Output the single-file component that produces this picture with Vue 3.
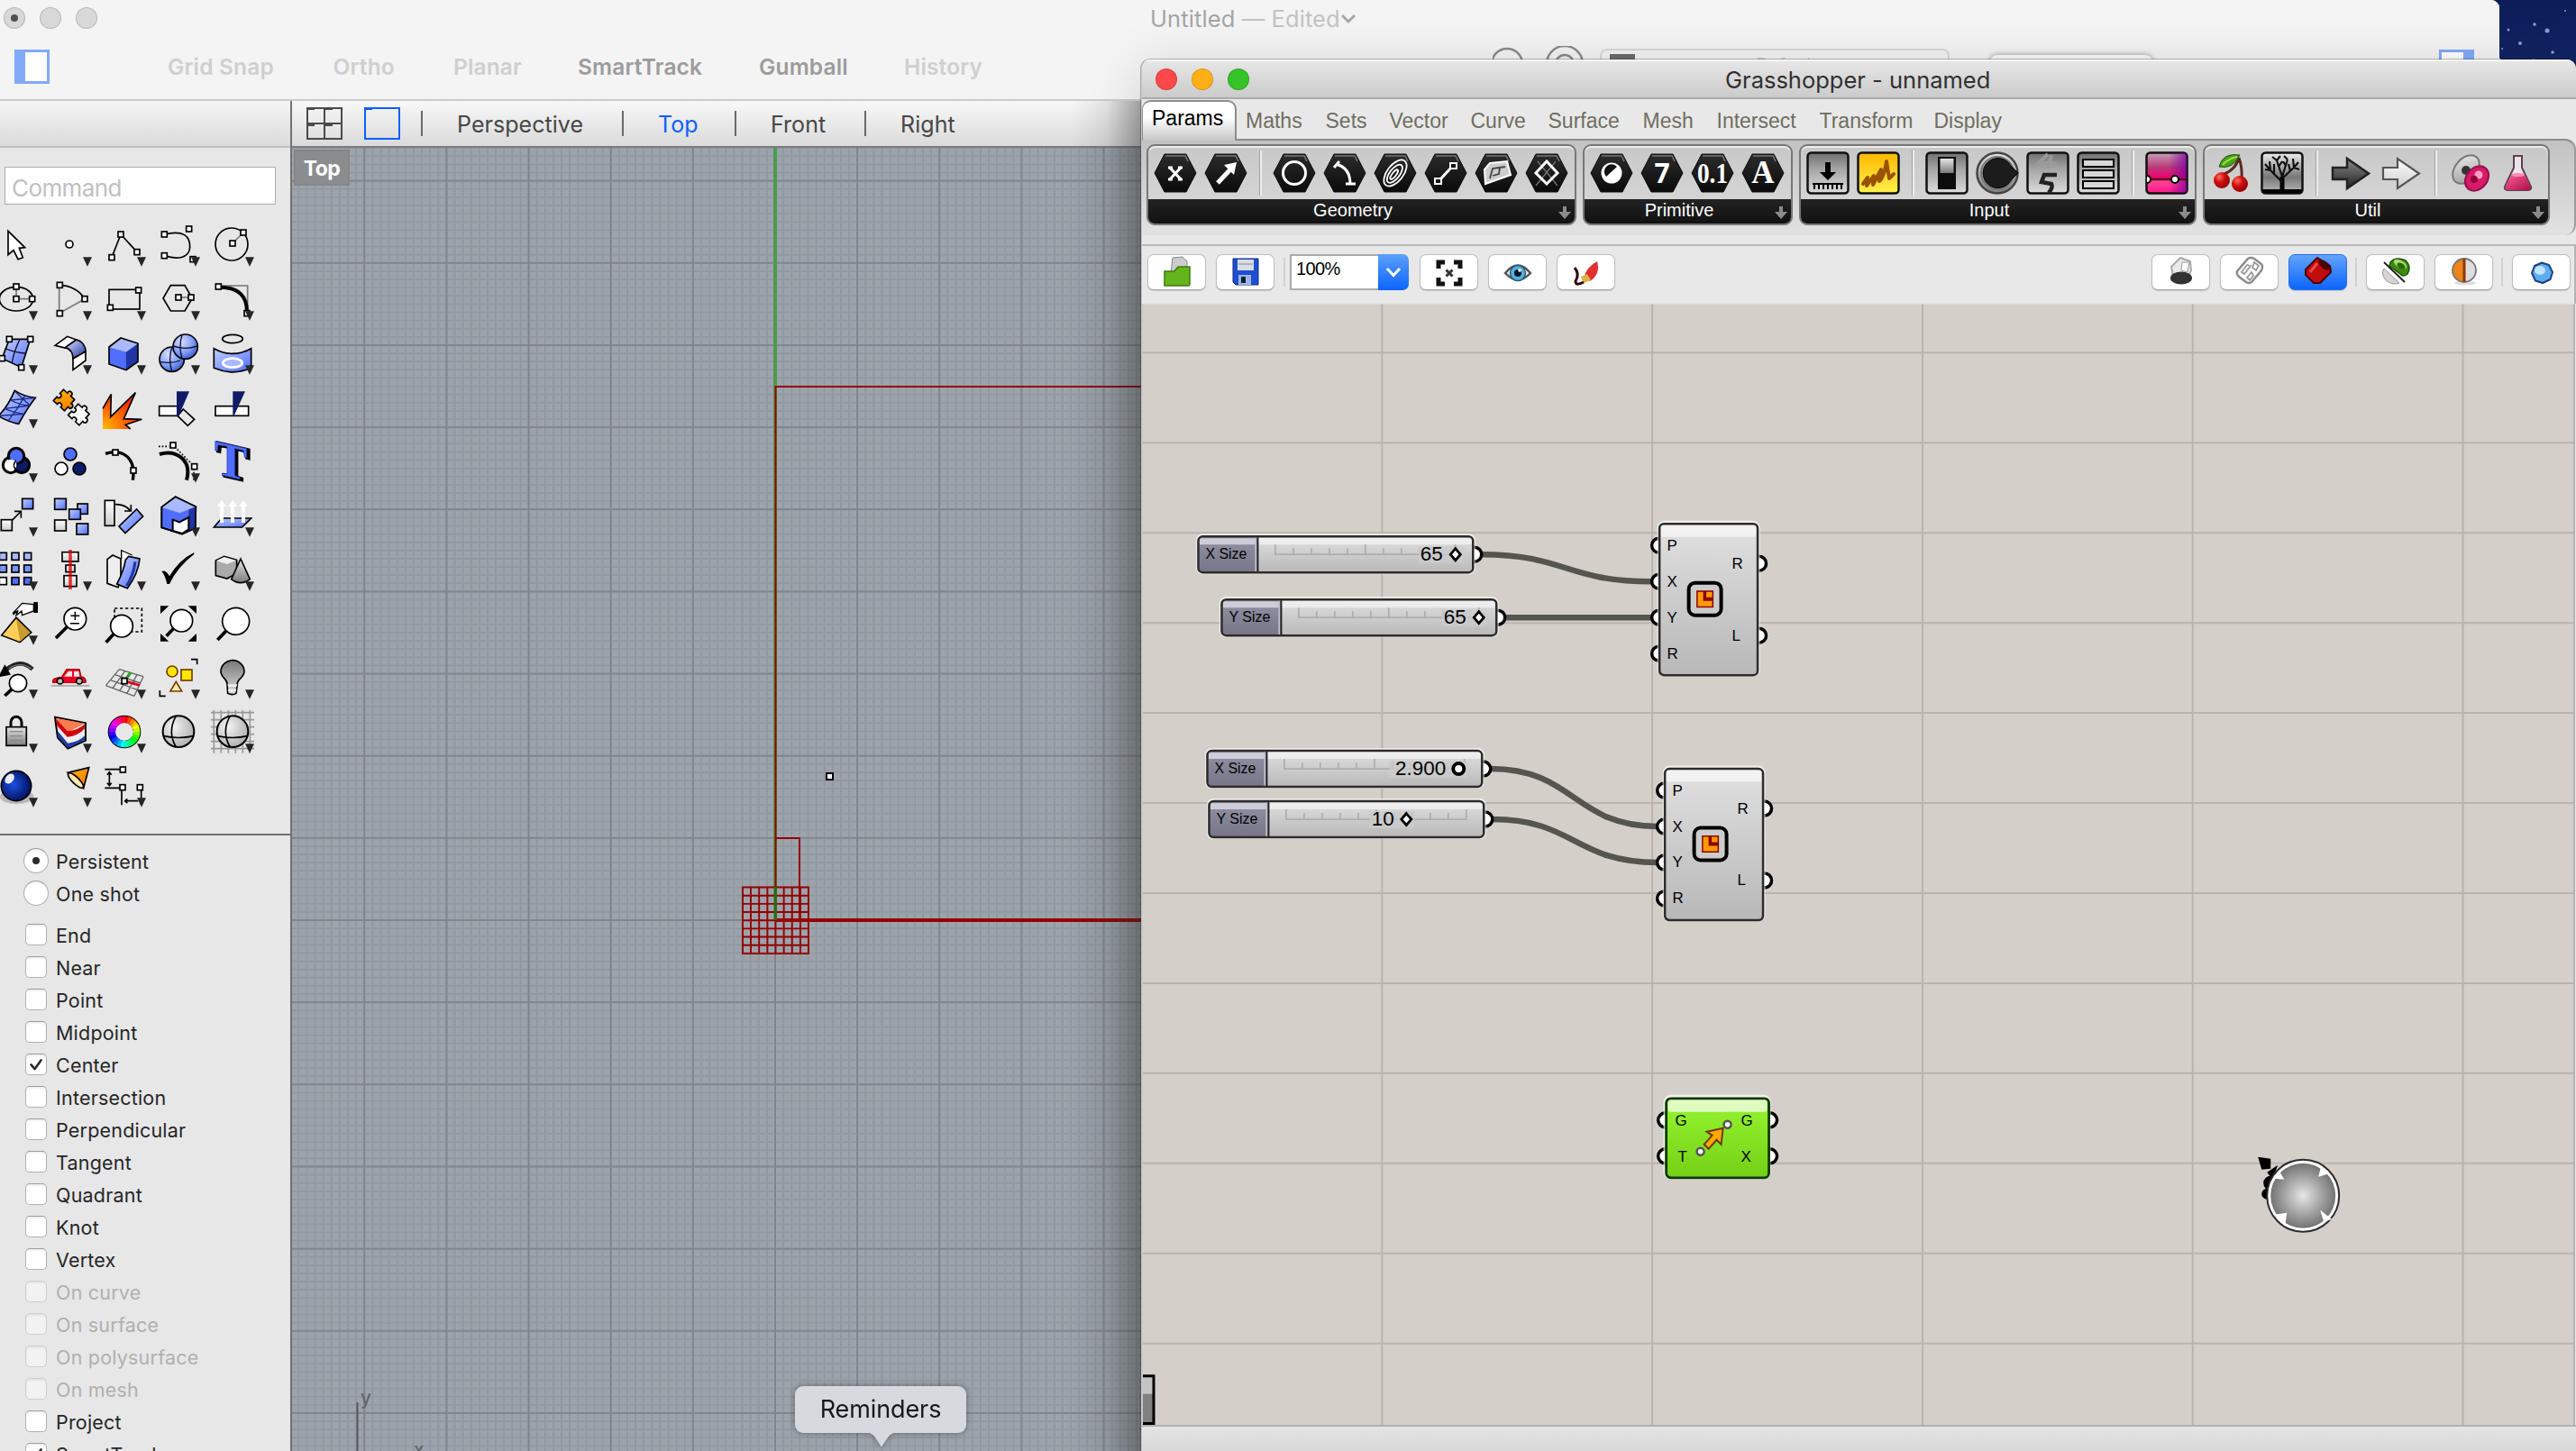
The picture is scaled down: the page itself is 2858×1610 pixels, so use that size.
<script setup>
const snaps = [
  { t: 'Grid Snap', w: 183.5 },
  { t: 'Ortho', w: 133.5 },
  { t: 'Planar', w: 138 },
  { t: 'SmartTrack', w: 201 },
  { t: 'Gumball', w: 161 },
  { t: 'History', w: 100 },
].map((s) => ({ ...s, on: s.t === 'SmartTrack' || s.t === 'Gumball' }))
const views = [
  { t: 'Perspective', w: 141 },
  { t: 'Top', w: 43, on: true },
  { t: 'Front', w: 62 },
  { t: 'Right', w: 64 },
]
const osnaps = [
  { t: 'End' }, { t: 'Near' }, { t: 'Point' }, { t: 'Midpoint' }, { t: 'Center', on: true },
  { t: 'Intersection' }, { t: 'Perpendicular' }, { t: 'Tangent' }, { t: 'Quadrant' }, { t: 'Knot' },
  { t: 'Vertex' }, { t: 'On curve', off: true }, { t: 'On surface', off: true },
  { t: 'On polysurface', off: true }, { t: 'On mesh', off: true }, { t: 'Project' }, { t: 'SmartTrack', on: true },
]

/* Tool palette: every glyph is drawn in 180-unit cells of one shared sheet */
const q = (x, y, s = 18) => `<rect x="${x - s / 2}" y="${y - s / 2}" width="${s}" height="${s}" fill="#fff" stroke="#000" stroke-width="5"/>`
const ln = (d, c = '#000', w = 5, f = 'none', x = '') => `<path d="${d}" fill="${f}" stroke="${c}" stroke-width="${w}" ${x}/>`
const ci = (x, y, r, f = '#fff', w = 5) => `<circle cx="${x}" cy="${y}" r="${r}" fill="${f}" stroke="#000" stroke-width="${w}"/>`
const bx = (x, y, w, h, f = 'url(#blueG)') => `<rect x="${x}" y="${y}" width="${w}" height="${h}" fill="${f}" stroke="#000" stroke-width="5"/>`
const lens = (x, y, r, hx, hy) => ln(`M${x - r * 0.72} ${y + r * 0.72}L${hx} ${hy}`, '#000', 11) + ci(x, y, r)
const wheel = Array.from({ length: 24 }, (_, i) => {
  const a = (i * 15 * Math.PI) / 180, b = ((i + 1.1) * 15 * Math.PI) / 180
  return `<path d="M${414 + 41 * Math.sin(a)} ${756 - 41 * Math.cos(a)}A41 41 0 0 1 ${414 + 41 * Math.sin(b)} ${756 - 41 * Math.cos(b)}" fill="none" stroke="hsl(${i * 15},100%,50%)" stroke-width="22"/>`
}).join('')
/* one jigsaw piece: knobs on two sides, sockets on the other two */
const piece = (x, y, f) => `<path transform="translate(${x} ${y}) rotate(42)" d="M-25 -25H-7C-14 -40 14 -40 7 -25H25V-7C40 -14 40 14 25 7V25H7C13 12 -13 12 -7 25H-25V7C-12 13 -12 -13 -25 -7Z" fill="${f}" stroke="#000" stroke-width="5" stroke-linejoin="round"/>`
const ball = (x, y, r, f = 'url(#greyBall)') => ci(x, y, r, f, 6) + ln(`M${x - r} ${y + 14}Q${x} ${y + 27} ${x + r} ${y + 14}M${x - 8} ${y - r}Q${x - 38} ${y} ${x - 8} ${y + r}`)
const glyphs = [
  ln('M27 49V128L45 113L60 143L76 137L64 106L83 104Z', '#000', 5, '#fff'),
  ci(231, 93, 12),
  ln('M372 137L402 60L456 119') + q(372, 137) + q(402, 60) + q(456, 119),
  ln('M547 60C610 45 634 65 632 105C628 140 590 145 547 131') + q(547, 60) + q(547, 131) + q(629, 42) + q(642, 143),
  ci(771, 93, 54, 'none') + ln('M774 90L810 54', '#777') + q(774, 90) + q(810, 54),
  `<ellipse cx="54" cy="275" rx="56" ry="40" fill="none" stroke="#000" stroke-width="5"/>` + ln('M54 234V275H107', '#777') + q(54, 234) + q(54, 275) + q(107, 275),
  ln('M197 229V323L282 275', '#777') + ln('M199 229Q255 232 282 275') + q(199, 229) + q(199, 323) + q(282, 275),
  bx(363, 244, 102, 65, 'none') + q(461, 246) + q(367, 304),
  ln('M543 273L568 230H615L640 273L615 315H568Z') + ln('M594 270H636', '#777') + q(594, 270) + q(636, 270),
  ln('M726 231H824V323', '#777') + ln('M735 236Q824 238 822 322', '#000', 12) + q(727, 234) + q(822, 323),
  ln('M31 409H101L71 503L7 473Z', '#000', 5, 'url(#blueG)') + ln('M66 409Q46 450 40 488M16 440Q52 455 86 456', '#113', 4) + q(31, 409) + q(101, 409) + q(71, 503) + q(7, 473),
  ln('M183 430L224 400L254 411L217 438Z', '#000', 5, '#fff') + ln('M254 411C275 415 286 435 285 450L243 474C243 455 235 442 217 437Z', '#000', 5, 'url(#blueD)') + ln('M285 450V480L243 511V474Z', '#000', 5, '#fff'),
  ln('M363 435L420 451V512L363 492Z', '#4f6dff', 1, '#4f6dff') + ln('M420 451L459 423V484L420 512Z', '#2034a4', 1, '#2034a4') + ln('M363 435L402 405L459 423L420 451Z', '#a9b9ff', 1, '#a9b9ff') + ln('M363 435L402 405L459 423V484L420 512L363 492Z'),
  ci(572, 476, 41, 'url(#blueBall)') + ln('M531 484Q572 492 600 480M572 436Q560 476 572 516', '#113', 4) + ci(617, 434, 41, 'url(#blueBall)') + ln('M577 432Q617 446 657 432M606 394Q594 434 606 474', '#113', 4),
  `<ellipse cx="774" cy="408" rx="34" ry="14" fill="none" stroke="#000" stroke-width="5"/>` + ln('M712 440Q774 474 836 440V505Q774 532 712 505Z', '#000', 5, 'url(#blueG)') + `<ellipse cx="774" cy="488" rx="32" ry="15" fill="#a9b9ff" stroke="#fff" stroke-width="8"/>`,
  ln('M49 580Q80 600 118 604Q90 640 62 691Q30 685 -5 665Q28 630 49 580Z', '#000', 5, 'url(#blueG)') + ln('M84 596Q60 640 28 680M35 612Q70 630 100 630M15 640Q50 655 82 658M49 582L100 630M118 604L35 612M100 630L15 640M82 658L-3 664', '#1c2c80', 4),
  piece(262, 660, '#fff') + piece(213, 612, 'url(#orangeG)'),
  `<path d="M342 640L370 592L368 668L451 587L412 674L472 676L418 692L434 708H342Z" fill="url(#fire)"/>` + ln('M342 640L370 592L368 668L451 587L412 674L472 676L418 694L434 708'),
  bx(530, 632, 62, 32, '#fff') + ln('M610 642L647 676L625 697L591 664Z', '#000', 5, '#e7e7e7') + `<path d="M588 583H630L594 667H588Z" fill="#101a66"/>`,
  bx(717, 632, 110, 32, '#fff') + `<path d="M775 583H816L779 664H775Z" fill="#101a66"/>`,
  ci(36, 828, 26, '#fff', 9) + ci(72, 828, 26, '#0d1a66', 9) + ci(54, 798, 26, '#4f6dff', 9) + `<circle cx="36" cy="828" r="19" fill="#fff"/><path d="M54 812Q40 825 52 845" stroke="#000" stroke-width="4" fill="none"/>`,
  ci(234, 792, 21, '#4f6dff') + ci(204, 840, 21) + ci(264, 840, 21, '#0d1a66'),
  ln('M351 790C400 775 455 795 442 878', '#000', 10) + q(384, 786) + q(444, 846),
  ln('M531 792C585 775 640 810 621 878', '#000', 12) + ln('M528 766H562M590 776L640 826M645 840V880', '#000', 5, 'none', 'stroke-dasharray="5 6"') + q(576, 762) + q(647, 833),
  `<g transform="translate(771 816) skewY(13)" font-family="Liberation Serif, serif" font-weight="bold" font-size="164" text-anchor="middle"><text x="5" y="55" fill="#101a66" stroke="#000" stroke-width="9">T</text><text x="-2" y="53" fill="#4f6dff" stroke="#2438a8" stroke-width="2">T</text></g>`,
  bx(74, -20, 36, 34) + bx(4, 50, 36, 36, 'url(#whiteG)') + ln('M40 52L68 24M48 22H70V44'),
  bx(182, -20, 38, 36) + bx(258, -3, 34, 34) + bx(230, 15, 38, 34) + bx(182, 51, 38, 36, 'url(#whiteG)') + bx(255, 63, 38, 36),
  bx(349, -14, 32, 84, 'url(#whiteG)') + ln('M455 15L476 39L417 95L396 72Z', '#000', 5, 'url(#blueG)') + ln('M384 -1Q416 -2 434 20M414 21H436V0'),
  ln('M538 8L584 -26L652 7L650 78L606 98L538 76Z', '#000', 5, '#4f6dff') + ln('M538 8L584 -26L652 7L598 27Z', '#a9b9ff', 1, '#a9b9ff') + `<path d="M628 16L652 7L650 78L628 87Z" fill="#2034a4"/>` + ln('M575 50L597 58L628 42V82L606 96L575 87Z', '#000', 6, '#fff') + ln('M538 8L584 -26L652 7L650 78L606 98L538 76Z'),
  ln('M712 75L738 45H836L806 75Z', '#000', 5, 'url(#blueG)') + [738, 774, 810].map((x) => `<path d="M${x - 6} 60V6H${x - 15}L${x} -16L${x + 15} 6H${x + 6}V60Z" fill="#fff"/>`).join(''),
  [172, 213, 254].map((y, j) => [10, 51, 92].map((x, i) => bx(x - 12, y - 12, 24, 24, j === 2 ? (i ? '#4f6dff' : '#fff') : j ? '#7b93ff' : '#a9b9ff')).join('')).join(''),
  bx(207, 158, 54, 31, 'url(#whiteG)') + bx(219, 201, 30, 23, 'url(#whiteG)') + bx(213, 236, 42, 36, 'url(#whiteG)') + ln('M234 150V282', '#d00000', 11, 'none', 'opacity=".75"'),
  ln('M404 180V152L440 168', '#000', 4, '#fff') + ln('M357 182L375 168L402 180V250L393 275L357 262Z', '#000', 5, '#eee') + ln('M428 172L465 180Q460 230 424 278L389 264Q412 220 418 184Z', '#000', 5, 'url(#blueG)') + ln('M450 190Q444 236 421 270', '#2034a4', 9),
  `<path d="M538 222Q552 216 564 238Q596 184 645 160Q648 162 645 166Q592 206 564 264L556 264Q550 236 538 222Z" fill="#000"/>`,
  ln('M718 186L746 172L788 184V228L756 246L718 236Z', '#000', 5, '#aaa') + `<path d="M720 187L746 174L786 185L756 198Z" fill="#eee"/>` + ln('M801 180L832 248Q800 272 770 248Z', '#000', 5, 'url(#greyG)'),
  ln('M5 435L54 376L104 425L66 458Z', '#000', 5, '#ffcf5a') + `<path d="M54 380L101 425L67 455Z" fill="#c99a2c"/>` + ln('M112 332L74 328L42 362L52 354L44 366L60 352L54 368L72 354L74 368L90 362L112 354Z', '#000', 4, '#fff') + `<rect x="112" y="324" width="14" height="36"/>`,
  lens(250, 380, 37, 186, 444) + ln('M250 356V384M235 370H265M234 395H264', '#000', 4.5),
  `<rect x="381" y="345" width="91" height="78" fill="none" stroke="#000" stroke-width="5" stroke-dasharray="10 8"/>` + lens(405, 404, 37, 353, 458),
  lens(604, 386, 37, 554, 437) + `<path d="M534 337H562L534 363ZM654 337H626L654 363ZM534 455H562L534 429ZM654 455H626L654 429Z"/>`,
  lens(785, 388, 45, 724, 450),
  ln('M108 548Q70 510 22 548', '#222', 14) + ln('M104 546Q70 520 30 545', '#777', 4) + `<path d="M-6 574L16 532L36 566Z"/>` + lens(60, 594, 29, 16, 636),
  `<path d="M170 600H298V605H170Z" fill="#aaa"/>` + ln('M176 592Q172 576 205 574L222 548H264L270 572Q288 575 285 592Z', '#b00010', 4, '#f00020') + `<path d="M213 572L228 554H240V572ZM246 554H262L265 572H246Z" fill="#e7e7e7"/>` + ci(200, 587, 10, '#bbb') + ci(264, 587, 10, '#bbb'),
  ln('M397 548L477 572M383 566L468 594M368 584L457 616M352 602L447 637M397 548L352 602M416 554L375 611M436 560L398 620M456 566L422 629M477 572L447 637', '#666', 4) + ln('M414 587L435 558', '#29a029', 9) + ln('M414 587L465 601', '#e00020', 9) + q(414, 587),
  `<circle cx="573" cy="555" r="18" fill="#ffe600" stroke="#7a3b00" stroke-width="5"/><rect x="603" y="549" width="36" height="36" fill="#ffe600" stroke="#7a3b00" stroke-width="5"/><path d="M586 589L605 621H567Z" fill="#ffe9a8" stroke="#7a3b00" stroke-width="5"/>` + ln('M636 515H656V532M532 618V637H551'),
  ln('M756 596C756 580 735 575 735 555A39 37 0 0 1 813 555C813 575 790 580 790 596L786 628Q774 636 758 628Z', '#000', 5, 'url(#bulb)') + `<path d="M757 598H790L787 606H759ZM759 614H787L785 622H760Z" fill="#eee"/>`,
  ln('M36 742V724A18 18 0 0 1 72 724V742', '#000', 9) + bx(21, 740, 67, 62, 'url(#greyG)') + ln('M33 755H75M33 770H75M33 784H75', '#888', 4),
  ln('M183 707L285 727V785L226 812L192 776Z', '#000', 6, '#eee') + `<path d="M186 710L283 728L224 758Z" fill="#ff7c4c"/><path d="M186 712L224 754Q260 752 283 730V744Q260 770 224 773L190 736Z" fill="#d00010"/><path d="M191 752L226 794Q262 790 283 768V784L226 809L194 774Z" fill="#1c3ca8"/>`,
  `<circle cx="414" cy="756" r="55"/>` + wheel + `<circle cx="414" cy="756" r="30" fill="#e7e7e7"/>`,
  ball(594, 755, 52),
  ln([712, 736, 760, 784, 808, 832].map((x) => `M${x} 684V827`).join('') + [692, 716, 740, 764, 788, 812].map((y) => `M702 ${y}H846`).join(''), '#999', 5) + ball(774, 755, 52),
  `<ellipse cx="56" cy="972" rx="56" ry="24" fill="#000" opacity=".2"/>` + ci(54, 936, 50, 'url(#deepBall)') + `<ellipse cx="32" cy="912" rx="13" ry="19" fill="#fff" opacity=".9" transform="rotate(40 32 912)"/>`,
  ln('M225 892L296 875L278 944Z', '#000', 5, 'url(#orangeG)') + `<ellipse cx="252" cy="918" rx="34" ry="11" transform="rotate(44 252 918)" fill="#ffe7b0" stroke="#000" stroke-width="5"/>`,
  ln('M349 881H400M349 943H400M405 950V1000M470 950V985M364 892V933M357 899L364 890L371 899M357 926L364 935L371 926M415 986H460M424 979L416 986L424 993') + q(409, 882) + q(408, 941) + q(466, 941),
]
const arrows = '01111 11111 11111 10000 10010 10011 11111 10000 11111 11101 111'.replace(/ /g, '')
const tools = glyphs.map((g, i) => {
  const r = Math.floor(i / 5), x = -36 + (i % 5) * 180, y = r < 5 ? 3 + 180 * r : -57 + 180 * (r - 5)
  const tri = arrows[i] === '1' ? `<path d="M${x + 132} ${y + 133}H${x + 162}L${x + 147} ${y + 164}Z" fill="#262626"/>` : ''
  return { box: `${x} ${y} 180 180`, svg: g + tri }
})

/* Grasshopper ribbon */
const tabs = [
  { t: 'Maths', w: 88.5 }, { t: 'Sets', w: 71 }, { t: 'Vector', w: 90 }, { t: 'Curve', w: 86 }, { t: 'Surface', w: 105 },
  { t: 'Mesh', w: 82 }, { t: 'Intersect', w: 114 }, { t: 'Transform', w: 127 }, { t: 'Display', w: 80 },
]
const hex = (s) => `<path d="M12 3H36L47 24L36 45H12L1 24Z" fill="url(#hexG)" stroke="#0a0a0a"/><path d="M13 5H35L38 11" fill="none" stroke="#777" stroke-width="1.5"/><g fill="none" stroke="#fff" stroke-width="3">${s}</g>`
const tx = (s, n, dy = 33) => `<text x="24" y="${dy}" text-anchor="middle" fill="#fff" stroke="none" font-family="Liberation Serif, serif" font-weight="bold" font-size="${n}">${s}</text>`
const sqr = (s, f = 'url(#boxG)') => `<rect x="1.5" y="1.5" width="45" height="45" rx="4" fill="${f}" stroke="#111" stroke-width="2.5"/>${s}`
const groups = [
  { t: 'Geometry', icons: [
    hex('<path d="M18 18L30 31M30 18L18 31M16 18H21M27 18H32M16 31H21M27 31H32" stroke-width="3.2"/>'),
    hex('<path d="M15 35L29 20" stroke-width="5"/><path d="M22 15L36 12L33 26Z" fill="#fff" stroke="none"/>'), null,
    hex('<circle cx="24" cy="24" r="12.5"/>'),
    hex('<path d="M14 14Q30 18 30 36M12 18L18 11M25 36H36"/>'),
    hex('<g stroke-width="1.8" transform="rotate(38 24 24)"><ellipse cx="24" cy="24" rx="9" ry="17"/><ellipse cx="24" cy="25" rx="5.5" ry="12"/><ellipse cx="24" cy="26" rx="2.2" ry="6.5"/></g>'),
    hex('<path d="M18 31L30 18"/><path d="M12 30H19V36H12ZM29 13H36V19H29Z" fill="#111" stroke-width="2"/>'),
    hex('<path d="M17 13L36 11L40 26L12 36L11 20Z" fill="#ccc" stroke-width="2"/><path d="M17 30L20 19L34 17M28 18L27 25L20 27" stroke="#444" stroke-width="1.8"/>'),
    hex('<path d="M14 11L36 38M34 11L12 38" stroke="#777" stroke-width="1.2"/><path d="M24 11L36 24L24 36L12 24Z"/>'),
  ] },
  { t: 'Primitive', icons: [
    hex('<circle cx="24" cy="24" r="11.5" fill="#fff" stroke="none"/><path d="M18 28A8 8 0 0 1 30 17Z" fill="#111" stroke="none"/>'),
    hex('<text x="24" y="35" text-anchor="middle" fill="#fff" stroke="none" font-family="Open Sans, sans-serif" font-weight="bold" font-size="30">7</text>'),
    hex(`<g transform="translate(24 0) scale(.88 1) translate(-24 0)">${tx('0.1', 31, 35)}</g>`), hex(tx('A', 35, 35)),
  ] },
  { t: 'Input', icons: [
    sqr('<path d="M21 12H27V23H33L24 32L15 23H21Z"/><path d="M7 36H41M9 36V42M14 36V42M19 36V42M24 36V42M29 36V42M34 36V42M39 36V42" stroke="#000" stroke-width="2"/>'),
    sqr('<path d="M7 36L12 29L11 38L19 27L18 37L27 20L25 33Q30 30 33 11L36 30L41 25" fill="none" stroke="#9a5200" stroke-width="4" stroke-linejoin="round" stroke-linecap="round"/>', 'url(#yellowG)'), null,
    sqr('<rect x="14" y="6" width="20" height="36" fill="#0c0c0c"/><rect x="16.500" y="8" width="15" height="16" fill="url(#greyG)"/>'),
    '<circle cx="24" cy="24" r="22.500" fill="url(#greyG)" stroke="#444" stroke-width="2.500"/><circle cx="24" cy="24" r="18" fill="none" stroke="#777" stroke-width="2"/><path d="M39 16A16.500 16.500 0 1 0 39 32L47 24Z" fill="#1c1c1c" stroke="#000"/>',
    sqr('<path d="M24 3L14 13H34M28 4L24 19" fill="none" stroke="#999" stroke-width="4"/><path d="M34 26H20L17 34L28 36Q30 40 25 46" fill="none" stroke="#222" stroke-width="4.500"/>'),
    sqr('<g fill="#d8d8d8" stroke="#000" stroke-width="2"><rect x="7" y="9" width="34" height="8"/><rect x="7" y="21" width="34" height="8"/><rect x="7" y="33" width="34" height="8"/></g>'), null,
    sqr('<rect x="2" y="2" width="44" height="44" rx="3" fill="url(#violetG)"/><path d="M2 31H46" stroke="#511" stroke-width="2.500"/><circle cx="33" cy="31" r="4" fill="#fff" stroke="#000" stroke-width="2"/><path d="M2 27A4 4 0 0 1 2 35" fill="#fff" stroke="#000" stroke-width="2"/>', 'url(#pinkG)'),
  ] },
  { t: 'Util', icons: [
    '<path d="M32 7Q29 20 14 26M32 7Q36 18 35 30" fill="none" stroke="#5a2820" stroke-width="3"/><path d="M33 4Q14 1 10 17Q26 20 33 4Z" fill="#4ca018" stroke="#1c5008"/><path d="M30 6Q20 8 14 15" stroke="#9ce050" stroke-width="2" fill="none"/><circle cx="13" cy="32" r="9" fill="url(#cherry)"/><circle cx="33" cy="36" r="9" fill="url(#cherry)"/>',
    sqr('<path d="M2 42H46V46H2Z"/><path d="M24 44V28" stroke="#000" stroke-width="5"/><path d="M24 34L11 21M24 30L37 18M24 28L18 10M24 28L30 9M11 21L5 20M11 21L10 11M37 18L43 20M37 18L36 8M18 10L13 6M18 10L22 5M30 9L26 5M15 25L15 14M33 22L31 14M20 17L24 11M28 16L25 11M37 18L42 12M11 21L5 14" stroke="#111" stroke-width="2.200" fill="none"/>', 'url(#treeG)'), null,
    '<path d="M4 18H20V8L44 24.500L20 41V31H4Z" fill="url(#darkG)" stroke="#222" stroke-width="2.500"/>',
    '<path d="M4 18H20V8L44 24.500L20 41V31H4Z" fill="url(#whiteG)" stroke="#555" stroke-width="2.200"/>', null,
    '<ellipse cx="20" cy="20" rx="12" ry="18" fill="url(#pod)" stroke="#777" stroke-width="2" transform="rotate(40 20 20)"/><circle cx="20" cy="21" r="5" fill="#333"/><ellipse cx="32" cy="30" rx="11.500" ry="15" fill="#d81868" stroke="#90104a" stroke-width="2" transform="rotate(40 32 30)"/><circle cx="34" cy="26" r="4.500" fill="#ff9cc0"/><circle cx="29" cy="31" r="4" fill="#90003c"/>',
    '<path d="M16 5H27M17 6V18L7 39Q6 43 11 43H32Q37 43 36 39L26 18V6" fill="#ece4e8" stroke="#604050" stroke-width="2"/><path d="M14.500 26H29L35.500 39Q36 43 32 43H11Q7 42 7.500 39Z" fill="url(#flask)"/><ellipse cx="21.700" cy="26" rx="7.500" ry="2" fill="#ff8ab0"/>',
  ] },
]
const leftBtns = [
  '<path d="M15 4L26 3L31 8V22H13Z" fill="#ccc" stroke="#888"/><path d="M6 35V19H17L21 14H34V33Q34 35 32 35Z" fill="#66b41c" stroke="#3c7c10" stroke-width="1.500"/>',
  '<path d="M6 5H34V34H9L6 31Z" fill="#1f4fd0" stroke="#102c88"/><path d="M11 6H29V18H11Z" fill="#d8dce4"/><path d="M12 23H26V34H12Z" fill="#9fb4e0"/><path d="M15 25H20V32H15Z" fill="#123"/><path d="M12 11H28" stroke="#888"/>',
]
const midBtns = [
  '<path d="M8 16V9H15M25 9H32V16M32 26V33H25M15 33H8V26" fill="none" stroke="#111" stroke-width="5"/><path d="M16.500 17.500L23.500 24.500M23.500 17.500L16.500 24.500" stroke="#333" stroke-width="3"/>',
  '<path d="M6 21Q20 4 34 21Q20 36 6 21Z" fill="#e8eef2" stroke="#555" stroke-width="2.500"/><circle cx="20" cy="21" r="8.500" fill="#5aaedc" stroke="#24607c" stroke-width="1.500"/><circle cx="20" cy="21" r="4" fill="#001830"/><circle cx="22" cy="18" r="1.800" fill="#fff"/>',
  '<path d="M17 27Q20 14 32 8Q36 22 24 30Z" fill="#e03030"/><path d="M14 25L21 22L25 29L17 32Z" fill="#e0b040"/><path d="M17 31Q8 36 8 30Q13 22 7 15" fill="none" stroke="#300808" stroke-width="3"/>',
]
const rightBtns = [
  [
    { s: '<path d="M9 14L19 4L30 8L31 18L28 24H11Z" fill="#eaeaea" stroke="#aaa" stroke-width="2" stroke-linejoin="round"/><path d="M20 18L21 9L29 9L27 20Z" fill="#fff" stroke="#999"/><ellipse cx="20" cy="26.500" rx="12" ry="7" fill="#333"/>' },
    { s: '<path d="M6 19L18 5Q21 3 25 5L33 11Q35 14 33 18L22 31Q19 33 16 31L8 25Q5 22 6 19Z" fill="#fff" stroke="#8c8c8c" stroke-width="2.500"/><path d="M11 20L17 12L21 13L14 22ZM17 26L22 20L24 24L20 29ZM25 9L30 13L27 18L23 15Z" fill="#fff" stroke="#999" stroke-width="1.800"/>' },
    { on: true, s: '<path d="M19 4L33 13L34 20L22 32H15L6 23V17Z" fill="#c00c0c" stroke="#4c0000" stroke-width="2" stroke-linejoin="round"/><ellipse cx="27" cy="12" rx="8" ry="4" transform="rotate(38 27 12)" fill="#4c0000"/><path d="M11 20L19 10" stroke="#f04848" stroke-width="3"/>' },
  ],
  [
    { s: '<path d="M7 16L24 32Q16 35 9 29Q3 22 7 16Z" fill="#d4d4d4" stroke="#999"/><path d="M14 9Q20 2 31 7Q38 14 33 22Q28 26 25 22L13 13Z" fill="#3c8c10" stroke="#1c5004" stroke-width="1.500"/><ellipse cx="25" cy="11" rx="8" ry="4" transform="rotate(30 25 11)" fill="#a8dc6c"/><ellipse cx="26" cy="13" rx="5" ry="3" transform="rotate(30 26 13)" fill="#2c6808"/><path d="M7 9L30 31" stroke="#222" stroke-width="2"/>' },
    { s: '<ellipse cx="21" cy="32" rx="12" ry="2.500" fill="#e0e0e0"/><circle cx="20" cy="18" r="13" fill="#ddd"/><path d="M20 5A13 13 0 0 0 20 31Z" fill="#ec8418"/><circle cx="20" cy="18" r="13" fill="none" stroke="#777" stroke-width="1.800"/><path d="M20 5V31" stroke="#8c3800" stroke-width="3"/>' },
  ],
  [{ s: '<path d="M20 9.500L28 12L32 20L29.500 28L21 32L13 29.500L9 21L12 13Z" fill="#5cacf0" stroke="#20407c" stroke-width="2" stroke-linejoin="round"/><ellipse cx="18" cy="18" rx="6" ry="5" fill="#c0e4ff"/>' }],
]

/* Definition canvas, in canvas pixels */
const sliders = [
  { x: 60, y: 257, n: 'X Size', v: '65', vx: 333, k: 'd', kx: 347 },
  { x: 86, y: 327, n: 'Y Size', v: '65', vx: 359, k: 'd', kx: 373 },
  { x: 70, y: 495, n: 'X Size', v: '2.900', vx: 336.500, k: 'o', kx: 350.500 },
  { x: 72, y: 551, n: 'Y Size', v: '10', vx: 279, k: 'd', kx: 292.500 },
]
const comps = [{ x: 573, y: 243.500 }, { x: 579, y: 515.500 }]
const wires = [
  'M377 278C470 278 470 308 566 308',
  'M403 348H566',
  'M387 516C480 516 480 580 572 580',
  'M389 572C480 572 480 620 572 620',
]
const stars = [[17, 33, 1.5], [30, 48, 2], [46, 27, 1.8], [60, 34, 2.5], [66, 58, 1.8], [45, 68, 2.6], [36, 78, 2.2], [75, 79, 2.6], [14, 90, 2.2], [10, 54, 1], [80, 12, 1], [26, 100, 1.3]]
</script>

<template>
  <div class="desktop">
    <svg class="defs" width="0" height="0" aria-hidden="true">
      <defs>
        <linearGradient id="blueG" x1="0" y1="0" x2="1" y2="1"><stop offset="0" stop-color="#c3d0ff" /><stop offset="1" stop-color="#4f6dff" /></linearGradient>
        <linearGradient id="blueD" x1="0" y1="0" x2="1" y2="1"><stop offset="0" stop-color="#dfe6ff" /><stop offset="1" stop-color="#1c2fa0" /></linearGradient>
        <linearGradient id="whiteG" x1="0" y1="0" x2="0" y2="1"><stop offset="0" stop-color="#fff" /><stop offset="1" stop-color="#ccc" /></linearGradient>
        <linearGradient id="treeG" x1="0" y1="0" x2="0" y2="1"><stop offset="0" stop-color="#eee" /><stop offset=".6" stop-color="#777" /><stop offset="1" stop-color="#bbb" /></linearGradient>
        <linearGradient id="greyG" x1="0" y1="0" x2="0" y2="1"><stop offset="0" stop-color="#e4e4e4" /><stop offset="1" stop-color="#7c7c7c" /></linearGradient>
        <linearGradient id="bulb" x1="0" y1="0" x2="0" y2="1"><stop offset="0" stop-color="#777" /><stop offset=".5" stop-color="#aaa" /><stop offset="1" stop-color="#ddd" /></linearGradient>
        <linearGradient id="orangeG" x1="0" y1="0" x2="1" y2="1"><stop offset="0" stop-color="#ffb400" /><stop offset="1" stop-color="#ff7a00" /></linearGradient>
        <linearGradient id="boxG" x1="0" y1="0" x2="0" y2="1"><stop offset="0" stop-color="#6f6f6f" /><stop offset=".4" stop-color="#a5a5a5" /><stop offset="1" stop-color="#dcdcdc" /></linearGradient>
        <linearGradient id="yellowG" x1="0" y1="0" x2="0" y2="1"><stop offset="0" stop-color="#ffb800" /><stop offset="1" stop-color="#fff04a" /></linearGradient>
        <linearGradient id="pinkG" x1="0" y1="0" x2="0" y2="1"><stop offset="0" stop-color="#c8a0b4" /><stop offset=".35" stop-color="#b83c78" /><stop offset=".62" stop-color="#f00070" /><stop offset=".66" stop-color="#ff4a98" /><stop offset="1" stop-color="#ff1888" /></linearGradient>
        <linearGradient id="violetG" x1="0" y1="0" x2="1" y2="0"><stop offset=".55" stop-color="#7a00a0" stop-opacity="0" /><stop offset="1" stop-color="#7a00a0" stop-opacity=".75" /></linearGradient>
        <linearGradient id="pod" x1="0" y1="0" x2="1" y2="1"><stop offset="0" stop-color="#eee" /><stop offset="1" stop-color="#999" /></linearGradient>
        <linearGradient id="darkG" x1="0" y1="0" x2="0" y2="1"><stop offset="0" stop-color="#888" /><stop offset="1" stop-color="#222" /></linearGradient>
        <linearGradient id="flask" x1="0" y1="0" x2="1" y2="1"><stop offset="0" stop-color="#ff5c94" /><stop offset="1" stop-color="#a8104c" /></linearGradient>
        <linearGradient id="hexG" x1="0" y1="0" x2="0" y2="1"><stop offset="0" stop-color="#2c2c2c" /><stop offset="1" stop-color="#0a0a0a" /></linearGradient>
        <linearGradient id="nodeG" x1="0" y1="0" x2="0" y2="1"><stop offset="0" stop-color="#e0e0e0" /><stop offset="1" stop-color="#b8b8b8" /></linearGradient>
        <linearGradient id="tagG" x1="0" y1="0" x2="0" y2="1"><stop offset="0" stop-color="#9391a4" /><stop offset="1" stop-color="#777588" /></linearGradient>
        <linearGradient id="greenG" x1="0" y1="0" x2="0" y2="1"><stop offset="0" stop-color="#96f530" /><stop offset="1" stop-color="#74d016" /></linearGradient>
        <radialGradient id="fire" cx=".05" cy=".95" r=".9"><stop offset="0" stop-color="#ffb400" /><stop offset="1" stop-color="#ff2c00" /></radialGradient>
        <radialGradient id="blueBall" cx=".35" cy=".3" r=".8"><stop offset="0" stop-color="#d4deff" /><stop offset=".6" stop-color="#7c98f4" /><stop offset="1" stop-color="#2c50c0" /></radialGradient>
        <radialGradient id="greyBall" cx=".35" cy=".35" r=".75"><stop offset="0" stop-color="#f4f4f4" /><stop offset="1" stop-color="#aaa" /></radialGradient>
        <radialGradient id="deepBall" cx=".4" cy=".45" r=".65"><stop offset="0" stop-color="#1c50e0" /><stop offset="1" stop-color="#000a50" /></radialGradient>
        <radialGradient id="cherry" cx=".35" cy=".3" r=".8"><stop offset="0" stop-color="#ff7060" /><stop offset=".4" stop-color="#d01010" /><stop offset="1" stop-color="#800" /></radialGradient>
        <radialGradient id="knob"><stop offset="0" stop-color="#e6e6e6" /><stop offset="1" stop-color="#747474" /></radialGradient>
      </defs>
    </svg>

    <svg class="sky" viewBox="0 0 92 110"><circle v-for="(s, i) in stars" :key="i" :cx="s[0]" :cy="s[1]" :r="s[2]" fill="#a9bce8" opacity=".8" /></svg>
    <div class="behind"></div>

    <section class="rhino">
      <header class="rh-head">
        <div class="rh-title">
          <div class="lights grey"><i class="dot"></i><i></i><i></i></div>
          <div class="doc">Untitled <span>— Edited</span>
            <svg width="18" height="12" viewBox="0 0 18 12"><path d="M2 2L9 9L16 2" fill="none" stroke="#a8a8a8" stroke-width="3" /></svg>
          </div>
        </div>
        <div class="rh-tools">
          <i class="pane"></i>
          <nav class="snaps"><span v-for="s in snaps" :key="s.t" :class="{ on: s.on }" :style="{ width: s.w + 'px' }">{{ s.t }}</span></nav>
          <svg class="rings" width="110" height="40" viewBox="0 0 110 40"><g fill="none" stroke="#8a8a8a" stroke-width="2.500"><circle cx="16" cy="20" r="17" /><circle cx="80" cy="20" r="20" /><circle cx="80" cy="20" r="10" /></g></svg>
          <div class="layer"><i></i><span>Default</span></div>
          <div class="popup"></div>
          <i class="pane right"></i>
        </div>
      </header>

      <div class="rh-body">
        <aside class="side">
          <div class="side-top"></div>
          <div class="cmd">Command</div>
          <div class="palette">
            <svg v-for="(t, i) in tools" :key="i" width="60" height="60" :viewBox="t.box" v-html="t.svg"></svg>
          </div>
          <div class="osnap">
            <div class="row radio"><i class="sel"></i><span>Persistent</span></div>
            <div class="row radio"><i></i><span>One shot</span></div>
            <div class="gap"></div>
            <div v-for="(o, i) in osnaps" :key="i" class="row check" :class="{ off: o.off }">
              <i><svg v-if="o.on" width="24" height="24" viewBox="0 0 24 24"><path d="M6 12.500L10.500 17.500L18 7" fill="none" stroke="#2a2a2a" stroke-width="2.800" stroke-linecap="round" stroke-linejoin="round" /></svg></i><span>{{ o.t }}</span>
            </div>
          </div>
        </aside>

        <main class="view">
          <nav class="vtabs">
            <svg width="40" height="36" viewBox="0 0 40 36"><path d="M1 1H39V35H1ZM20 1V35M1 18H39" fill="none" stroke="#4a4a4a" stroke-width="2" /><path d="M1 1H9V3H1ZM20 1H29V3H20ZM1 18H9V21H1ZM20 18H29V21H20Z" fill="#4a4a4a" /></svg>
            <svg class="single" width="40" height="36" viewBox="0 0 40 36"><path d="M1 1H39V35H1Z" fill="none" stroke="#0a60ff" stroke-width="2" /><path d="M1 1H9V3H1Z" fill="#0a60ff" /></svg>
            <template v-for="v in views" :key="v.t"><i class="bar"></i><span :class="{ on: v.on }" :style="{ width: v.w + 'px' }">{{ v.t }}</span></template>
          </nav>
          <svg class="port" width="943" height="1446" viewBox="324 164 943 1446">
            <defs>
              <pattern id="minor" x="860" y="1021" width="9.115" height="9.115" patternUnits="userSpaceOnUse"><path d="M-1 0H10M0 -1V10M9.115 -1V10M-1 9.115H10" stroke="#8d959d" stroke-width="1.900" opacity=".8" /></pattern>
              <pattern id="major" x="859" y="1020" width="91.150" height="91.150" patternUnits="userSpaceOnUse"><path d="M0 1H92M1 0V92" stroke="#80858e" stroke-width="2" /></pattern>
            </defs>
            <rect x="324" y="164" width="943" height="1446" fill="#9ca3ab" />
            <rect x="324" y="164" width="943" height="1446" fill="url(#minor)" />
            <rect x="324" y="164" width="943" height="1446" fill="url(#major)" />
            <path d="M860 164V1021" stroke="#4a9b4c" stroke-width="4" />
            <path d="M1267 429H860.500V1021H1267" fill="none" stroke="#960000" stroke-width="2" />
            <path d="M860 1021H1267" stroke="#960000" stroke-width="4" />
            <path d="M860 930H887V1021" fill="none" stroke="#960000" stroke-width="2" />
            <path d="M824 984.500H897V1058H824ZM824 993.700H897M824 1002.900H897M824 1012H897M824 1021.200H897M824 1030.400H897M824 1039.500H897M824 1048.700H897M833 984V1058M842.200 984V1058M851.400 984V1058M860.500 984V1058M869.700 984V1058M878.800 984V1058M888 984V1058" fill="none" stroke="#960000" stroke-width="1.900" />
            <path d="M860.500 984V1021" stroke="#2c6a10" stroke-width="3" />
            <rect x="917" y="858" width="7" height="7" fill="#fff" stroke="#000" stroke-width="2" />
            <path d="M396.500 1556V1610" stroke="#55575a" stroke-width="2" />
            <text x="400" y="1558" font-family="Inter, sans-serif" font-size="21" fill="#5f6265">y</text>
            <text x="459" y="1616" font-family="Inter, sans-serif" font-size="21" fill="#5f6265">x</text>
          </svg>
          <div class="tag">Top</div>
          <div class="fade"></div>
        </main>
      </div>
    </section>

    <section class="gh">
      <header class="gh-title">
        <div class="lights"><i class="r"></i><i class="y"></i><i class="g"></i></div>
        <h1>Grasshopper - unnamed</h1>
      </header>
      <nav class="gh-tabs">
        <span class="cur">Params</span>
        <span v-for="t in tabs" :key="t.t" :style="{ width: t.w + 'px' }">{{ t.t }}</span>
      </nav>
      <div class="ribbon">
        <div v-for="g in groups" :key="g.t" class="group">
          <div class="icons">
            <template v-for="(s, i) in g.icons" :key="i"><svg v-if="s" width="48" height="48" viewBox="0 0 48 48" v-html="s"></svg><i v-else></i></template>
          </div>
          <div class="cap"><span>{{ g.t }}</span><svg width="16" height="16" viewBox="0 0 16 16"><path d="M6 1H10V7H15L8 15L1 7H6Z" fill="#8c8c8c" /></svg></div>
        </div>
      </div>
      <div class="gh-tools">
        <button v-for="(b, i) in leftBtns" :key="'l' + i"><svg width="40" height="40" viewBox="0 0 40 40" v-html="b"></svg></button>
        <i class="sep"></i>
        <div class="zoom"><span>100%</span><b><svg width="18" height="12" viewBox="0 0 18 12"><path d="M2 2L9 9.500L16 2" fill="none" stroke="#fff" stroke-width="3" /></svg></b></div>
        <button v-for="(b, i) in midBtns" :key="'m' + i"><svg width="40" height="40" viewBox="0 0 40 40" v-html="b"></svg></button>
        <div class="push"></div>
        <template v-for="(set, k) in rightBtns" :key="'s' + k">
          <i v-if="k" class="sep thin"></i>
          <button v-for="(b, i) in set" :key="i" :class="{ on: b.on }"><svg width="40" height="40" viewBox="0 0 40 40" v-html="b.s"></svg></button>
        </template>
      </div>

      <svg class="canvas" width="1590" height="1244" viewBox="1 0 1590 1244">
        <rect width="1592" height="1245" fill="#d4cfc8" />
        <path d="M266.500 0V1245M566.500 0V1245M866.500 0V1245M1166.500 0V1245M1466.500 0V1245" stroke="#b9b4ae" stroke-width="2" />
        <path d="M0 54H1592M0 154H1592M0 254H1592M0 354H1592M0 454H1592M0 554H1592M0 654H1592M0 754H1592M0 854H1592M0 954H1592M0 1054H1592M0 1154H1592" stroke="#b9b4ae" stroke-width="2" />

        <path v-for="(w, i) in wires" :key="'w' + i" :d="w" fill="none" stroke="#55554f" stroke-width="6.500" />

        <g v-for="(s, i) in sliders" :key="'s' + i" font-family="Liberation Sans, Arial, sans-serif">
          <circle :cx="s.x + 309" :cy="s.y + 21" r="8" fill="#fff" stroke="#000" stroke-width="3.500" />
          <rect :x="s.x" :y="s.y - 2" width="310" height="45" rx="7" fill="#fff" opacity=".65" />
          <rect :x="s.x + 2.500" :y="s.y + 1" width="305" height="40" rx="4" fill="url(#nodeG)" />
          <rect :x="s.x + 3.500" :y="s.y + 2" width="303" height="8" rx="3" fill="#fff" opacity=".5" />
          <path :d="`M${s.x + 68} ${s.y + 2}H${s.x + 6}q-3 0-3 3v32q0 3 3 3H${s.x + 68}Z`" fill="url(#tagG)" />
          <path :d="`M${s.x + 4} ${s.y + 3}H${s.x + 66}V${s.y + 10}H${s.x + 4}Z`" fill="#d8d7e2" opacity=".85" />
          <path :d="`M${s.x + 66.500} ${s.y + 2}V${s.y + 40}`" stroke="#c3c2d0" stroke-width="2" />
          <path :d="`M${s.x + 68.500} ${s.y + 2}V${s.y + 40}`" stroke="#222" stroke-width="2" />
          <rect :x="s.x + 2.500" :y="s.y + 1" width="305" height="40" rx="5" fill="none" stroke="#2b2b2b" stroke-width="2.500" />
          <path :d="`M${s.x + 88} ${s.y + 21}H${s.x + 288}` + [0,1,2,3,4,5,6,7,8,9,10].map((n) => `M${s.x + 88 + n * 20} ${s.y + 22}v${n % 5 ? -8 : -12}`).join('')" stroke="#aeaeae" stroke-width="1.800" fill="none" />
          <rect :x="s.kx - (s.v.length > 2 ? 76 : 40)" :y="s.y + 12" :width="s.v.length > 2 ? 86 : 50" height="19" fill="#cbcbcb" opacity=".75" />
          <text :x="s.x + 10.500" :y="s.y + 26" font-size="16.500" textLength="46" lengthAdjust="spacingAndGlyphs">{{ s.n }}</text>
          <text :x="s.vx + 1" :y="s.y + 28" font-size="22.500" text-anchor="end">{{ s.v }}</text>
          <path v-if="s.k === 'd'" :d="`M${s.kx + 1} ${s.y + 14.500}l5.500 6.500l-5.500 6.500l-5.500-6.500Z`" fill="#fff" stroke="#000" stroke-width="2.800" />
          <circle v-else :cx="s.kx + 1" :cy="s.y + 21" r="6" fill="#fff" stroke="#000" stroke-width="4" />
        </g>

        <g v-for="(c, i) in comps" :key="'c' + i" :transform="`translate(${c.x} ${c.y})`" font-family="Liberation Sans, Arial, sans-serif" font-size="17">
          <circle v-for="y in [24, 64, 104, 144]" :key="y" cx="1" :cy="y + .5" r="8" fill="#fff" stroke="#000" stroke-width="3.500" />
          <circle v-for="y in [44, 124]" :key="'r' + y" cx="112" :cy="y + .5" r="8" fill="#fff" stroke="#000" stroke-width="3.500" />
          <rect x="-1" y="-3" width="114" height="173" rx="8" fill="#fff" opacity=".65" />
          <rect x="1.500" y="0.500" width="109" height="168" rx="5" fill="url(#nodeG)" />
          <rect x="3" y="1" width="106" height="14" rx="3" fill="#fff" opacity=".6" />
          <rect x="1.500" y="0.500" width="109" height="168" rx="5" fill="none" stroke="#2b2b2b" stroke-width="2.500" />
          <text x="10" y="30">P</text><text x="10" y="70">X</text><text x="10" y="110">Y</text><text x="10" y="150">R</text>
          <text x="82" y="50">R</text><text x="82" y="130">L</text>
          <rect x="34" y="66" width="36" height="36" rx="7" fill="#ccc" stroke="#000" stroke-width="4" />
          <rect x="42.500" y="74.500" width="19" height="19" fill="#8c0000" />
          <path d="M44 76H50V86H60V92H44ZM53.500 76H60V82H53.500Z" fill="#ff9a00" />
        </g>

        <g transform="translate(581 881)" font-family="Liberation Sans, Arial, sans-serif" font-size="17">
          <circle v-for="p in [[0, 25], [0, 65], [116, 25], [116, 65]]" :key="p.join()" :cx="p[0]" :cy="p[1]" r="8" fill="#fff" stroke="#000" stroke-width="3.500" />
          <rect x="-2" y="-3" width="119" height="94" rx="8" fill="#fff" opacity=".7" />
          <rect x="1" y="1" width="114" height="88" rx="5" fill="url(#greenG)" />
          <rect x="3" y="2" width="110" height="14" rx="3" fill="#fff" opacity=".7" />
          <rect x="1" y="1" width="114" height="88" rx="5" fill="none" stroke="#0c3a00" stroke-width="2.800" />
          <text x="11" y="31">G</text><text x="14" y="71">T</text><text x="84" y="31">G</text><text x="84" y="71">X</text>
          <path d="M43 52L52 42L46 38L64 34L62 52L57 47L48 57Z" fill="#ffa800" stroke="#6a3a00" stroke-width="2" />
          <circle cx="39" cy="60" r="4" fill="#fff" stroke="#555" stroke-width="2.500" /><circle cx="69" cy="30" r="4" fill="#fff" stroke="#555" stroke-width="2.500" />
        </g>

        <g transform="translate(1289 990)">
          <path d="M-50 -43L-36 -41V-30L-46 -29ZM-40 -26L-28 -34L-34 -18Z" /><circle cx="-36" cy="-14" r="8" /><circle cx="-40" cy="-2" r="6" />
          <circle r="40" fill="#fff" stroke="#2c2c2c" stroke-width="2" /><circle r="36" fill="url(#knob)" />
          <path d="M-32 -19L-26 -27L-21 -18ZM32 -21L20 -33L17 -21L27 -24ZM-32 21L-18 19L-20 34ZM32 26L19 16L23 29Z" fill="#fff" />
        </g>
        <g><rect x="1" y="1190" width="12" height="54" fill="#808080" /><rect x="1" y="1190" width="12" height="20" fill="#c4c4c4" /><path d="M1 1190H13V1243H1" fill="none" stroke="#000" stroke-width="3" /></g>
        <path d="M1590 0V1245" stroke="#b4b4b4" stroke-width="2" />
      </svg>
      <footer></footer>
    </section>

    <div class="tip">Reminders<svg width="34" height="17" viewBox="0 0 34 17"><path d="M0 0H34Q26 1 22 9L17 16.500L12 9Q8 1 0 0Z" fill="#d6d9de" /></svg></div>
  </div>
</template>

<style>
body { overflow: hidden; }
</style>

<style scoped>
* { box-sizing: border-box; }
.desktop { position: relative; width: 2858px; height: 1610px; overflow: hidden; background: #10245f; font-family: Inter, "Noto Sans", sans-serif; }
.defs { position: absolute; }
.sky { position: absolute; left: 2766px; top: 0; width: 92px; height: 110px; background: linear-gradient(#0c1d58, #14296a); }
.behind { position: absolute; left: 2740px; top: 60px; width: 42px; height: 60px; border-radius: 0 18px 0 0 / 0 30px 0 0; background: #cfcfcf; }

.rhino { position: absolute; left: 0; top: 0; width: 2773px; height: 1610px; border-radius: 0 9px 0 0; overflow: hidden; background: #e7e7e7; display: flex; flex-direction: column; }
.rh-head { height: 112px; background: #f4f4f4; border-bottom: 2px solid #cacaca; }
.rh-title { height: 40px; display: flex; align-items: center; }
.lights { display: flex; gap: 16px; }
.lights i { width: 24px; height: 24px; border-radius: 50%; border: 1px solid rgba(0, 0, 0, .15); }
.grey { margin-left: 4px; }
.grey i { background: #d8d8d8; display: flex; align-items: center; justify-content: center; }
.grey .dot::after { content: ""; width: 8px; height: 8px; border-radius: 50%; background: #505050; }
.doc { margin-left: 1168px; width: 260px; font-size: 25.500px; letter-spacing: .1px; color: #a5a5a5; white-space: nowrap; line-height: 41px; }
.doc span { color: #c3c3c3; }
.doc svg { margin-left: 0; vertical-align: 3px; }
.rh-tools { height: 70px; display: flex; }
.pane { flex: none; width: 39px; height: 38px; margin: 15px 0 0 16px; border: 3px solid #82aaf8; border-left-width: 12px; background: #fff; }
.pane.right { border-left-width: 3px; border-right-width: 12px; margin-left: 318px; }
.snaps { display: flex; margin-left: 131px; font-size: 24.500px; font-weight: 600; letter-spacing: .15px; line-height: 68px; color: #cfcfcf; }
.snaps span { white-space: nowrap; }
.snaps .on { color: #9c9c9c; }
.rings { margin: 11px 0 0 553px; flex: none; }
.layer { flex: none; margin: 14px 0 0 9px; width: 388px; height: 40px; border: 2px solid #d8d8d8; border-radius: 8px; display: flex; padding: 4px 9px; font-size: 20px; color: #d0d0d0; gap: 134px; }
.layer i { width: 28px; height: 28px; background: #6c6c6c; }
.popup { flex: none; margin: 21px 0 0 45px; width: 180px; height: 40px; border-radius: 8px; background: #f8f8f8; box-shadow: 0 0 6px rgba(0, 0, 0, .4); }
.rh-body { flex: 1; display: flex; min-height: 0; }
.side { width: 324px; border-right: 2px solid #707274; background: #e7e7e7; overflow: hidden; display: flex; flex-direction: column; }
.side-top { flex: none; height: 52px; background: linear-gradient(#f5f5f5, #dadada); border-bottom: 2px solid #c0c0c0; }
.cmd { flex: none; margin: 21px 0 14px 5px; width: 301px; height: 42px; border: 1.500px solid #adadad; background: #fff; color: #c0c0c0; font-size: 26px; line-height: 46px; padding-left: 7px; letter-spacing: -.6px; }
.palette { flex: none; display: grid; grid-template-columns: repeat(5, 60px); grid-auto-rows: 60px; margin-left: -12px; height: 684px; }
.palette svg { overflow: visible; display: block; }
.osnap { flex: none; border-top: 2px solid #6e6e6e; padding: 10px 0 0 26px; font-size: 21.500px; letter-spacing: .2px; color: #262626; }
.row { height: 36px; display: flex; align-items: center; white-space: nowrap; }
.row span { margin: 1px 0 0 -1px; }
.row i { flex: none; background: #fff; border: 1.500px solid #b0b0b0; border-top-color: #9c9c9c; box-shadow: inset 0 2px 2px rgba(0, 0, 0, .06); display: flex; align-items: center; justify-content: center; }
.radio i { width: 28px; height: 28px; border-radius: 50%; margin-right: 9px; }
.radio .sel::after { content: ""; width: 8px; height: 8px; border-radius: 50%; background: #2a2a2a; }
.check i { width: 24px; height: 24px; border-radius: 5px; margin: 0 11px 0 2px; }
.off { color: #b0b0b0; }
.off i { background: #f2f2f2; border-color: #cdcdcd; }
.gap { height: 10px; }
.view { position: relative; width: 944px; display: flex; flex-direction: column; }
.vtabs { flex: none; height: 52px; display: flex; align-items: center; padding-left: 16px; background: linear-gradient(#f8f8f8, #dadada); border-bottom: 2px solid #7c7c7c; font-size: 25px; letter-spacing: .05px; color: #474747; }
.vtabs span { white-space: nowrap; padding-top: 2px; }
.vtabs .single { margin-left: 24px; }
.vtabs .bar { width: 2px; height: 28px; background: #6a6a6a; margin: 0 38px 0 42px; }
.vtabs .single + .bar { margin-left: 23px; }
.vtabs .on { color: #0a60ff; }
.port { display: block; flex: none; }
.tag { position: absolute; left: 2px; top: 54px; width: 62px; height: 40px; background: #8a8d90; border: 2px solid #858788; color: #fff; font-weight: 700; font-size: 23px; letter-spacing: -.5px; line-height: 39px; text-align: center; }
.fade { position: absolute; right: 0; top: 0; bottom: 0; width: 80px; background: linear-gradient(to right, transparent, rgba(60, 60, 60, .1) 50%, rgba(50, 50, 50, .4)); }

.gh { position: absolute; left: 1266px; top: 66px; width: 1592px; height: 1560px; border-radius: 10px 10px 0 0; overflow: hidden; background: #e8e8e8; box-shadow: 0 0 0 1px rgba(0, 0, 0, .25), 0 10px 60px rgba(0, 0, 0, .16); border-left: 1px solid #c6c6c6; font-family: "Liberation Sans", Arial, sans-serif; display: flex; flex-direction: column; }
.gh > * { flex: none; }
.gh-title { height: 44px; background: linear-gradient(#e6e6e6, #cbcbcb); border-top: 2px solid #f4f4f4; border-bottom: 2px solid #ababab; display: flex; align-items: center; padding-left: 15px; }
.gh-title .r { background: #fc4848; } .gh-title .y { background: #fdb016; } .gh-title .g { background: #35c427; }
.gh-title h1 { margin: 0 0 0 528px; font: 400 25.500px Inter, sans-serif; letter-spacing: 0; color: #303030; white-space: nowrap; }
.gh-tabs { height: 44px; display: flex; line-height: 48px; font-size: 23px; color: #6e6e60; background: #e8e8e8; }
.gh-tabs .cur { width: 105px; height: 45px; margin: 1px 10px 0 0; padding-left: 10px; line-height: 36px; color: #000; background: linear-gradient(#fff 40%, #c6c6c6); border: 2px solid #8c8c8c; border-left-width: 1px; border-bottom: 0; border-radius: 10px 10px 0 0; position: relative; z-index: 1; }
.ribbon { height: 107px; border-top: 2px solid #8c8c8c; border-right: 2px solid #9c9c9c; border-radius: 0 12px 12px 0; background: linear-gradient(#c2c2c2, #e2e2e2); padding: 4px 0 0 5px; display: flex; gap: 7px; align-items: flex-start; }
.group { height: 90px; border: 2px solid #777; border-radius: 9px; overflow: hidden; background: linear-gradient(#c8c8c8, #dadada); box-shadow: inset 0 2px 0 #eee; display: flex; flex-direction: column; }
.icons { flex: none; height: 59px; display: flex; gap: 8px; align-items: center; padding: 1px 7px 0 6px; }
.icons i { width: 12px; height: 50px; background: linear-gradient(to right, transparent 5px, #a0a0a0 5px, #a0a0a0 6px, #eee 6px, #eee 8px, transparent 8px); }
.cap { flex: 1; background: linear-gradient(#232323, #101010); color: #fff; font-size: 20px; display: flex; align-items: center; line-height: 24px; padding: 0 3px 4px 0; }
.cap span { flex: 1; text-align: center; }
.cap svg { margin-top: 6px; }
.gh-tools { height: 66px; margin-top: 10px; border-top: 2px solid #b8b8b8; border-right: 2px solid #b4b4b4; display: flex; align-items: flex-start; gap: 11px; padding: 9px 4px 0 6px; background: #e8e8e8; }
.gh-tools button { width: 65px; height: 40px; border: 1px solid #bfbfbf; border-bottom-color: #a8a8a8; border-radius: 7px; background: #fff; box-shadow: 0 1px 1px rgba(0, 0, 0, .15); padding: 0; display: flex; align-items: center; justify-content: center; }
.gh-tools button svg { flex: none; }
.gh-tools button.on { background: linear-gradient(#62a4fc, #0c64fc); border-color: #2470f0; }
.sep { width: 2px; height: 32px; background: #d0d0d0; margin: 4px -6px 0 -1px; }
.sep.thin { margin: 4px -1px 0 -2px; }
.zoom { display: flex; width: 132px; height: 40px; background: #fff; border: 2px solid #ababab; border-right: 0; border-radius: 0 7px 7px 0; font-size: 20px; letter-spacing: -.6px; margin-right: 1px; }
.zoom span { flex: 1; padding: 3px 0 0 5px; }
.zoom b { width: 34px; margin: -2px 0; border-radius: 0 7px 7px 0; background: linear-gradient(#5ca0fc, #0c64fc); display: flex; align-items: center; justify-content: center; }
.push { flex: 1; }
.canvas { display: block; border-left: 1px solid #c8c8c8; }
.gh footer { height: 40px; border-top: 2px solid #b0b0b0; background: linear-gradient(#e4e4e4, #d8d8d8 28px); }

.tip { position: absolute; left: 882px; top: 1538px; width: 190px; height: 52px; border-radius: 9px; background: #d6d9de; color: #15171a; font-size: 27px; letter-spacing: -.1px; line-height: 51px; text-align: center; filter: drop-shadow(0 0 3px rgba(0, 0, 0, .4)); }
.tip svg { position: absolute; left: 79px; top: 51px; }
</style>
